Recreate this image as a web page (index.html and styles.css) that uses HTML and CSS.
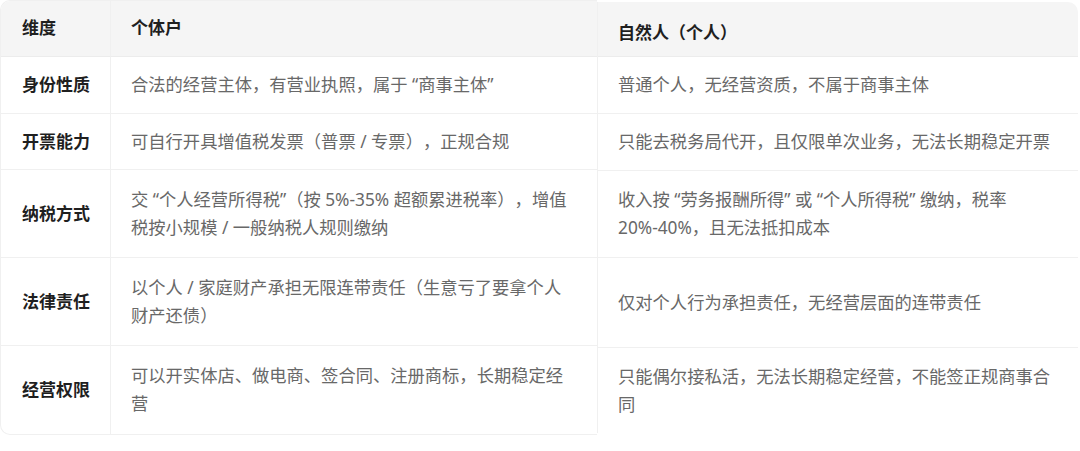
FILE: index.html
```html
<!DOCTYPE html>
<html lang="zh-CN">
<head>
<meta charset="utf-8">
<title>个体户 vs 自然人</title>
<link rel="stylesheet" href="styles.css">
</head>
<body>
<div class="wrap">
  <div class="tbl left">
    <div class="cell head first">维度</div>
    <div class="cell head">个体户</div>
    <div class="cell label first">身份性质</div>
    <div class="cell">合法的经营主体，有营业执照，属于 “商事主体”</div>
    <div class="cell label first">开票能力</div>
    <div class="cell">可自行开具增值税发票（普票 / 专票），正规合规</div>
    <div class="cell label first">纳税方式</div>
    <div class="cell">交 “个人经营所得税”（按 5%-35% 超额累进税率），增值<br>税按小规模 / 一般纳税人规则缴纳</div>
    <div class="cell label first">法律责任</div>
    <div class="cell">以个人 / 家庭财产承担无限连带责任（生意亏了要拿个人<br>财产还债）</div>
    <div class="cell label first last">经营权限</div>
    <div class="cell last">可以开实体店、做电商、签合同、注册商标，长期稳定经<br>营</div>
  </div>
  <div class="tbl right">
    <div class="cell head">自然人（个人）</div>
    <div class="cell">普通个人，无经营资质，不属于商事主体</div>
    <div class="cell">只能去税务局代开，且仅限单次业务，无法长期稳定开票</div>
    <div class="cell">收入按 “劳务报酬所得” 或 “个人所得税” 缴纳，税率<br>20%-40%，且无法抵扣成本</div>
    <div class="cell">仅对个人行为承担责任，无经营层面的连带责任</div>
    <div class="cell last">只能偶尔接私活，无法长期稳定经营，不能签正规商事合<br>同</div>
  </div>
</div>
</body>
</html>
```
FILE: styles.css
```css
* { box-sizing: border-box; }
html, body {
  margin: 0;
  padding: 0;
  background: #ffffff;
}
body {
  width: 1080px;
  height: 451px;
  overflow: hidden;
  font-family: "Noto Sans", "Noto Sans CJK SC", sans-serif;
  font-size: 17.3px;
  color: #686868;
  text-spacing-trim: space-all;
}
.wrap {
  display: flex;
  align-items: flex-start;
}
.tbl {
  display: grid;
  background: #ffffff;
}
.left {
  width: 597px;
  grid-template-columns: 110px 1fr;
  grid-template-rows: 56px 57px 56px 88px 88px 88px;
  border: 1px solid #f0f0f0;
  border-right: none;
  border-radius: 10px 0 0 10px;
  overflow: hidden;
}
.right {
  flex: 1;
  margin-top: 2px;
  margin-right: 2px;
  grid-template-columns: 1fr;
  grid-template-rows: 55px 57px 57px 87px 90px 85px;
  border-left: 1px solid #f0f0f0;
  border-radius: 0 10px 10px 0;
  overflow: hidden;
}
.cell {
  display: flex;
  align-items: center;
  padding: 0 4px 0 20px;
  line-height: 28px;
  white-space: nowrap;
  border-bottom: 1px solid #f0f0f0;
}
.cell.last { border-bottom: none; }
.left .cell.first {
  padding-left: 21px;
  border-right: 1px solid #f0f0f0;
}
.head {
  background: #f5f5f5;
  color: #1f1f1f;
  font-weight: 700;
  font-size: 17px;
  border-bottom-color: #ececec;
}
.left .head { padding-bottom: 2px; }
.right .head { padding-top: 8px; }
.label {
  color: #1f1f1f;
  font-weight: 700;
  font-size: 17px;
}
```
